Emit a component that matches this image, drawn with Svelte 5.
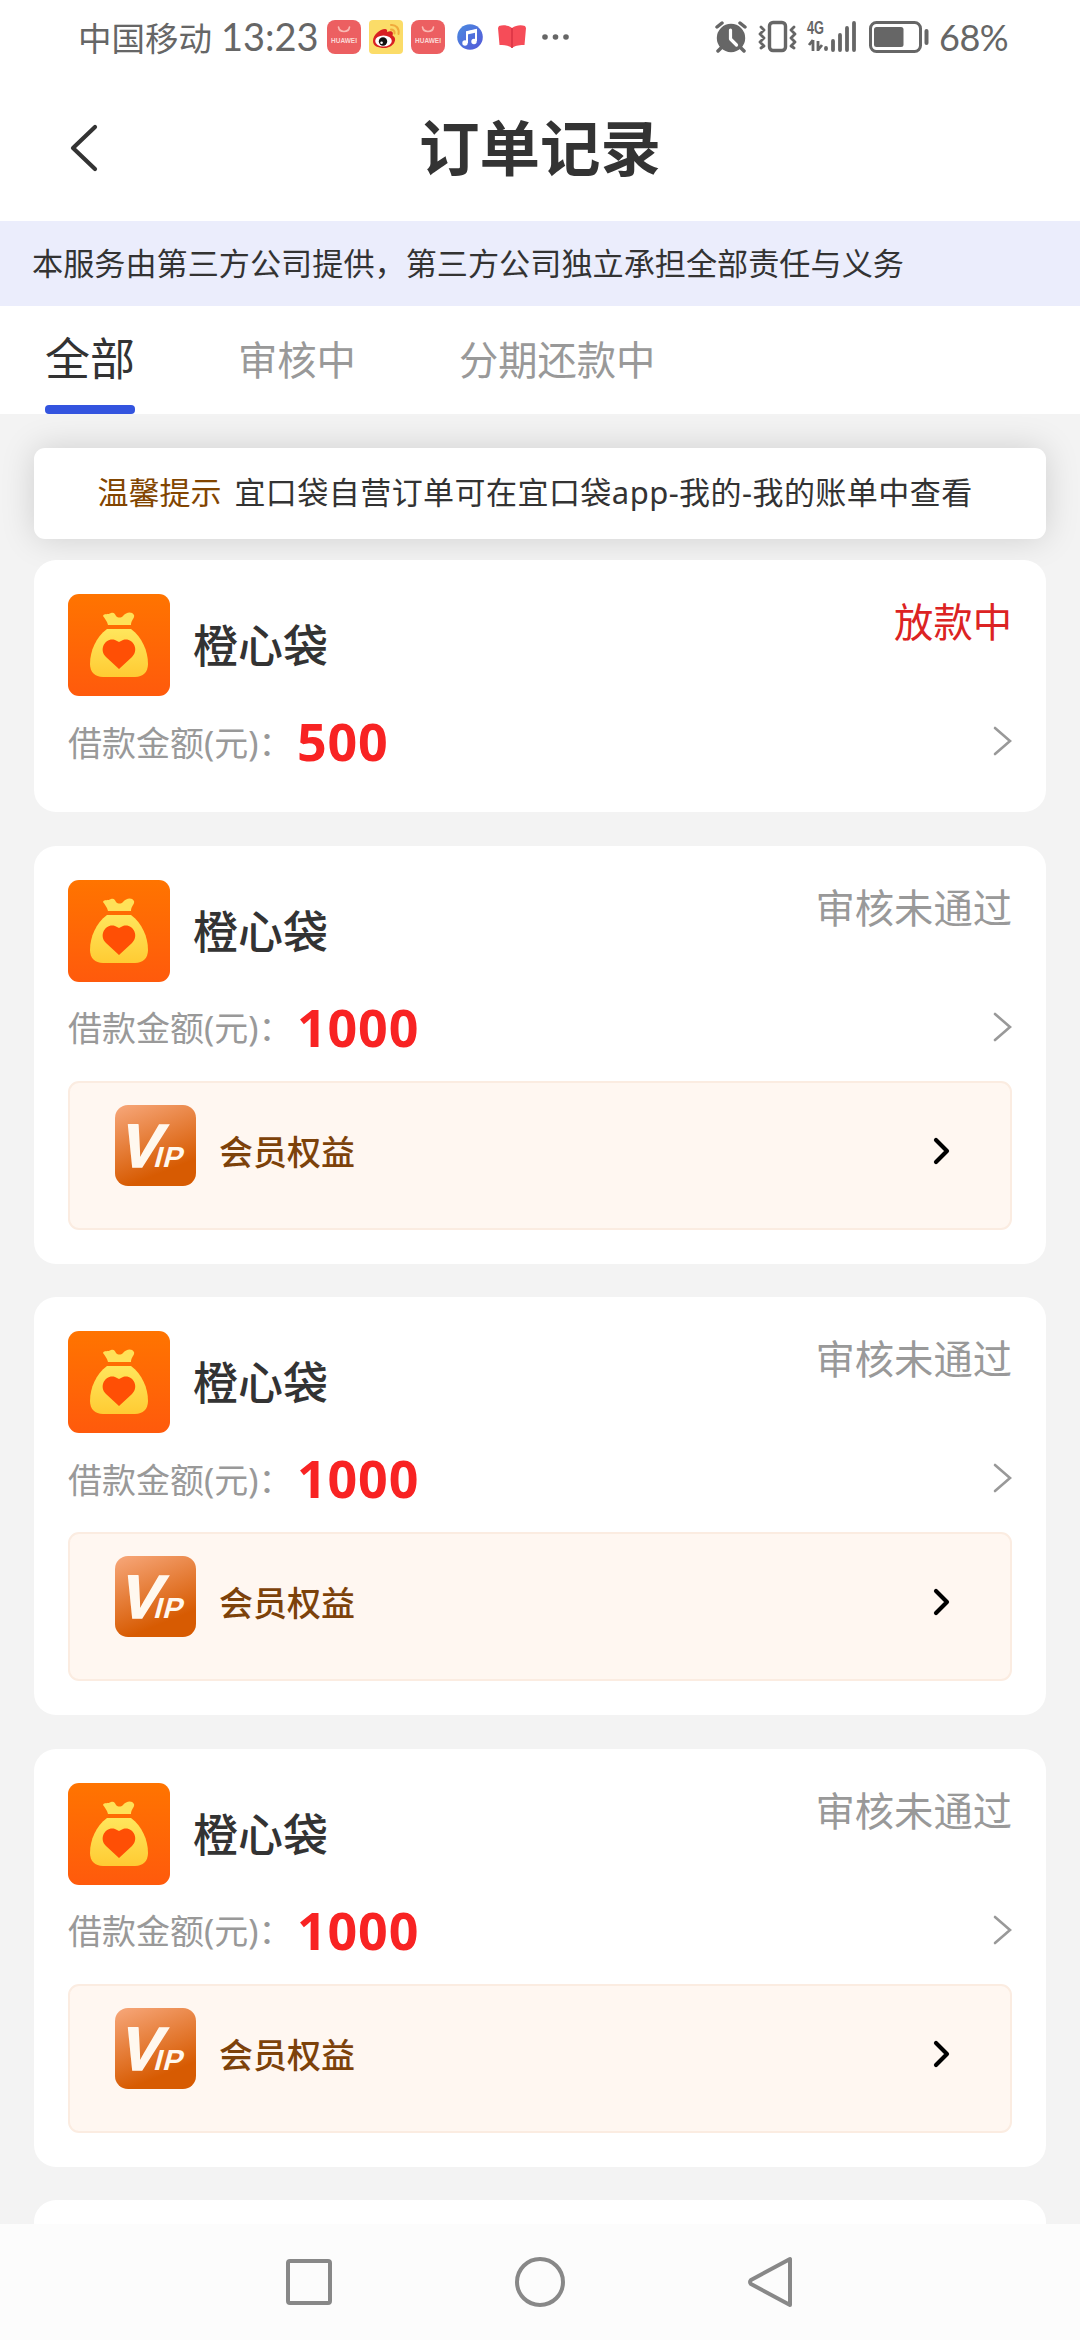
<script>
    const tabs = ["全部", "审核中", "分期还款中"];
    let active = "全部";

    const orders = [
        { name: "橙心袋", amount: "500", status: "放款中", paying: true, vip: false },
        { name: "橙心袋", amount: "1000", status: "审核未通过", paying: false, vip: true },
        { name: "橙心袋", amount: "1000", status: "审核未通过", paying: false, vip: true },
        { name: "橙心袋", amount: "1000", status: "审核未通过", paying: false, vip: true },
    ];
</script>

<div class="screen">
    <svg class="defs" width="0" height="0" aria-hidden="true">
        <defs>
            <linearGradient id="orange" x1="0" y1="0" x2="0" y2="1">
                <stop offset="0" stop-color="#ff7400"/>
                <stop offset="1" stop-color="#ff5a0c"/>
            </linearGradient>
            <linearGradient id="bag" x1="0" y1="0" x2="0" y2="1">
                <stop offset="0" stop-color="#ffe65c"/>
                <stop offset="1" stop-color="#ffcb33"/>
            </linearGradient>
            <linearGradient id="vip" x1="0.2" y1="0" x2="0.6" y2="1">
                <stop offset="0" stop-color="#f5a272"/>
                <stop offset="0.85" stop-color="#d75b02"/>
            </linearGradient>
            <linearGradient id="music" x1="0" y1="0" x2="1" y2="1">
                <stop offset="0" stop-color="#4a8be0"/>
                <stop offset="1" stop-color="#5558d8"/>
            </linearGradient>
        </defs>
    </svg>

    <div class="statusbar">
        <span class="carrier">中国移动</span>
        <span class="time">13:23</span>
        <div class="apps">
            {@render huawei()}
            <svg width="34" height="34" viewBox="0 0 34 34">
                <rect width="34" height="34" rx="4" fill="#fbdc68"/>
                <path d="M4 21c0-6 7-12 12-12 2 0 2.500 1.500 2 3 4-1.500 7-.5 5.500 3.500 6 3 1 12.500-8 12.500C9 28 4 26 4 21z" fill="#d81f22"/>
                <ellipse cx="14.500" cy="21" rx="8.300" ry="5.600" fill="#fff"/>
                <circle cx="14" cy="21.500" r="4.200" fill="#111"/>
                <circle cx="12.600" cy="22.700" r="1.300" fill="#fff"/>
                <path d="M22 5c5-.5 8.500 3.500 7.500 9M22 9.500c2.500 0 4 1.500 3.500 4" fill="none" stroke="#f0aa3c" stroke-width="2" stroke-linecap="round"/>
            </svg>
            {@render huawei()}
            <svg width="34" height="34" viewBox="0 0 34 34">
                <circle cx="17" cy="17" r="12.800" fill="url(#music)"/>
                <path d="M14 23V12l9-2v11" fill="none" stroke="#fff" stroke-width="2"/>
                <path d="M14 13l9-2" stroke="#fff" stroke-width="3"/>
                <circle cx="12" cy="23" r="2.700" fill="#fff"/>
                <circle cx="21" cy="21.500" r="2.700" fill="#fff"/>
            </svg>
            <svg width="34" height="34" viewBox="0 0 34 34">
                <path d="M4 6c4-1.500 9-1 13 2 4-3 9-3.500 13-2l1 2-1.500 17c-4 0-8.500 0-12.500 3-4-3-8.500-3-12.500-3L3 8z" fill="#f64c58"/>
                <path d="M17 8v20" stroke="#d93243" stroke-width="1.500"/>
            </svg>
        </div>
        <svg class="dots" width="28" height="6" viewBox="0 0 28 6" fill="#666">
            <circle cx="3" cy="3" r="2.800"/><circle cx="13.500" cy="3" r="2.800"/><circle cx="24" cy="3" r="2.800"/>
        </svg>

        <svg class="signals" width="216" height="36" viewBox="0 0 216 36" fill="#666">
            <!-- alarm -->
            <circle cx="16" cy="19" r="14.200"/>
            <path d="M2 8l5-4M25 4l5 4M6 29l-3 3M26 29l3 3" stroke="#666" stroke-width="3.500" stroke-linecap="round"/>
            <path d="M15.500 11v9l6 6" fill="none" stroke="#fff" stroke-width="3.200" stroke-linecap="round" stroke-linejoin="round"/>
            <!-- vibrate -->
            <rect x="54.500" y="3.500" width="16" height="28" rx="3.500" fill="none" stroke="#666" stroke-width="3.400"/>
            <path d="M46 8l3 3-4 4 4 4-4 4 4 4-3 2M79 8l-3 3 4 4-4 4 4 4-4 4 3 2" fill="none" stroke="#666" stroke-width="2.800" stroke-linecap="round" stroke-linejoin="round"/>
            <!-- network -->
            <text x="92" y="15" font-size="18" font-weight="700" textLength="17" lengthAdjust="spacingAndGlyphs">4G</text>
            <path d="M98 21v11M94 26l4-5M103 22v10M103 31l4-5" fill="none" stroke="#666" stroke-width="2.800"/>
            <path d="M111 29v1M118 22v9M125 16v15M132 9v22M139 4v27" stroke="#666" stroke-width="3.800" stroke-linecap="round"/>
            <!-- battery -->
            <rect x="155.500" y="3.500" width="50" height="29" rx="6" fill="none" stroke="#666" stroke-width="3"/>
            <rect x="159" y="8" width="29.500" height="20" rx="2.500"/>
            <path d="M211.500 12v12" stroke="#666" stroke-width="4" stroke-linecap="round"/>
        </svg>
        <span class="percent">68%</span>
    </div>

    <header>
        <svg class="back" width="30" height="50" viewBox="0 0 30 50">
            <path d="M26 4L4 25l22 21" fill="none" stroke="#333" stroke-width="4.200" stroke-linecap="round" stroke-linejoin="round"/>
        </svg>
        <h1>订单记录</h1>
    </header>

    <div class="banner">本服务由第三方公司提供，第三方公司独立承担全部责任与义务</div>

    <nav class="tabs">
        {#each tabs as tab}
            <button class:active={tab === active} on:click={() => active = tab}>{tab}</button>
        {/each}
    </nav>

    <main>
        <div class="notice"><b>温馨提示</b><span>宜口袋自营订单可在宜口袋app-我的-我的账单中查看</span></div>

        {#each orders as order}
            <section class="card">
                <div class="top">
                    <svg class="logo" width="102" height="102" viewBox="0 0 102 102">
                        <rect width="102" height="102" rx="11" fill="url(#orange)"/>
                        <path d="M35 22c1-3 5-1 8-3 3-1 4 1 5 3 2 2 5 2 7 0 3-4 9-5 11-1 1 3-3 5-3 10H40c-1-4-3-6-5-9z" fill="#ffe158"/>
                        <path d="M39 35h24c11 8 17 22 17 35 0 8-5 13-13 13H35c-8 0-13-5-13-13 0-13 6-27 17-35z" fill="url(#bag)"/>
                        <path d="M51 75L38 63c-8-8 0-20 9-17l4 2 4-2c9-3 17 9 9 17z" fill="#ff4f05"/>
                    </svg>
                    <span class="name">{order.name}</span>
                    <span class="status" class:paying={order.paying}>{order.status}</span>
                </div>
                <div class="money">
                    <span class="label">借款金额(元)：</span>
                    <strong>{order.amount}</strong>
                    <svg width="20" height="32" viewBox="0 0 20 32">
                        <path d="M3 3l15 13L3 29" fill="none" stroke="#999" stroke-width="2.600" stroke-linecap="round"/>
                    </svg>
                </div>
                {#if order.vip}
                    <div class="benefit">
                        <svg class="vip" width="81" height="81" viewBox="0 0 81 81">
                            <rect width="81" height="81" rx="13" fill="url(#vip)"/>
                            <path d="M13 19h10v4H14z" fill="#fff8ef"/>
                            <text transform="translate(0 61.500) skewX(-15)" x="2" y="0"><tspan class="big">V</tspan><tspan class="small" dx="-5">IP</tspan></text>
                        </svg>
                        <span>会员权益</span>
                        <svg class="go" width="20" height="32" viewBox="0 0 20 32">
                            <path d="M4 5l11 11L4 27" fill="none" stroke="#000" stroke-width="4.200" stroke-linecap="round" stroke-linejoin="round"/>
                        </svg>
                    </div>
                {/if}
            </section>
        {/each}
        <section class="card next"></section>
    </main>

    <footer>
        <svg width="50" height="54" viewBox="0 0 50 54"><rect x="4" y="6" width="42" height="42" rx="2" /></svg>
        <svg width="50" height="54" viewBox="0 0 50 54"><circle cx="25" cy="27" r="23"/></svg>
        <svg width="50" height="54" viewBox="0 0 50 54"><path d="M44 4v46L5 29q-2-2 0-4z"/></svg>
    </footer>
</div>

{#snippet huawei()}
    <svg width="34" height="34" viewBox="0 0 34 34">
        <rect width="34" height="34" rx="8" fill="#ec5f61"/>
        <path d="M11.500 7c1 6 10 6 11 0" fill="none" stroke="#f9b9b4" stroke-width="1.600" stroke-linecap="round"/>
        <text x="4" y="22.500" font-size="7.500" font-weight="700" fill="#fbd9d6" textLength="26" lengthAdjust="spacingAndGlyphs">HUAWEI</text>
    </svg>
{/snippet}

<style>
    :global(body) {
        background: #f3f3f3;
    }

    .screen {
        display: flex;
        flex-direction: column;
        width: 1080px;
        height: 2340px;
        overflow: hidden;
        background: #f3f3f3;
        color: #333;
        font-family: "Noto Sans", "Noto Sans CJK SC", sans-serif;
    }

    .defs {
        position: absolute;
    }

    svg {
        display: block;
        flex: none;
    }

    svg text {
        font-family: "Liberation Sans", sans-serif;
    }

    .statusbar {
        display: flex;
        align-items: center;
        flex: none;
        box-sizing: border-box;
        height: 74px;
        padding-left: 78px;
        background: #fff;
        color: #666;
        white-space: nowrap;
    }

    .carrier {
        width: 143px;
        padding-bottom: 2px;
        font-size: 33.500px;
    }

    .time {
        width: 106px;
        padding-bottom: 2px;
        font-family: Lato, sans-serif;
        font-size: 38px;
    }

    .apps {
        display: flex;
        gap: 8px;
    }

    .dots {
        margin-left: 13px;
    }

    .signals {
        margin-left: 145px;
    }

    .percent {
        margin-left: 8px;
        padding-bottom: 1px;
        font-family: Lato, sans-serif;
        font-size: 36px;
        letter-spacing: -0.5px;
    }

    header {
        display: grid;
        grid-template-columns: 150px 1fr 150px;
        align-items: center;
        flex: none;
        height: 147px;
        background: #fff;
    }

    .back {
        margin-left: 69px;
    }

    h1 {
        margin: 0;
        font-size: 60.5px;
        font-weight: 700;
        line-height: 80px;
        text-align: center;
    }

    .banner {
        flex: none;
        box-sizing: border-box;
        height: 85px;
        padding-left: 32px;
        background: #ebedfc;
        font-size: 31.15px;
        line-height: 85px;
        white-space: nowrap;
    }

    .tabs {
        display: flex;
        flex: none;
        gap: 103px;
        height: 108px;
        padding-left: 45px;
        background: #fff;
    }

    .tabs button {
        box-sizing: border-box;
        height: 108px;
        padding: 9px 0 0;
        border: 0;
        border-bottom: 9px solid transparent;
        background: none;
        color: #999;
        font: 39.3px/90px "Noto Sans", "Noto Sans CJK SC", sans-serif;
    }

    .tabs .active {
        padding-top: 8px;
        border-bottom: 0;
        color: #333;
        font-size: 45px;
    }

    .tabs .active::after {
        content: "";
        display: block;
        height: 9px;
        margin-top: 1px;
        border-radius: 4px;
        background: #3354df;
    }

    main {
        display: flex;
        flex-direction: column;
        flex: 1;
        gap: 33.6px;
        min-height: 0;
        padding: 34px 34px 0;
        overflow: hidden;
    }

    .notice {
        display: flex;
        justify-content: center;
        flex: none;
        gap: 13px;
        box-sizing: border-box;
        height: 91px;
        margin-bottom: -12.6px;
        padding-right: 10px;
        border-radius: 11px;
        background: #fff;
        box-shadow: 0 0 34px rgba(0, 0, 0, 0.15);
        font-size: 31px;
        line-height: 89px;
        white-space: nowrap;
    }

    .notice b {
        color: #824500;
        font-weight: 400;
    }

    .notice span {
        letter-spacing: 0.45px;
    }

    .card {
        position: relative;
        flex: none;
        box-sizing: border-box;
        padding: 34px;
        border-radius: 22px;
        background: #fff;
    }

    .next {
        height: 252px;
    }

    .top {
        display: flex;
        height: 102px;
    }

    .name {
        margin-left: 23px;
        font-size: 45px;
        font-weight: 500;
        line-height: 104px;
    }

    .status {
        margin-left: auto;
        color: #999;
        font-size: 39.3px;
        line-height: 56px;
    }

    .paying {
        color: #dc2323;
    }

    .money {
        display: flex;
        align-items: center;
        box-sizing: border-box;
        height: 82px;
        padding-top: 8px;
    }

    .money .label {
        width: 229px;
        color: #999;
        font-size: 34px;
        white-space: nowrap;
    }

    .money strong {
        color: #f82323;
        font-size: 52px;
        letter-spacing: 0.8px;
        line-height: 74px;
    }

    .money svg {
        margin-left: auto;
    }

    .benefit {
        display: flex;
        align-items: flex-start;
        box-sizing: border-box;
        height: 149px;
        margin-top: 17px;
        padding: 22px 58px 0 45px;
        border: 2px solid #fbece1;
        border-radius: 11px;
        background: #fff7f1;
        color: #7d420a;
        font-size: 34px;
        font-weight: 500;
        line-height: 95px;
    }

    .benefit span {
        margin-left: 23px;
    }

    .vip text {
        fill: #fff8ef;
        font-weight: 700;
    }

    .vip .big {
        font-size: 61px;
        stroke: #fff8ef;
        stroke-width: 1.5px;
    }

    .vip .small {
        font-size: 29px;
        letter-spacing: 1px;
    }

    .go {
        margin: 30px 0 0 auto;
    }

    footer {
        display: flex;
        justify-content: center;
        align-items: center;
        flex: none;
        gap: 181px;
        height: 116px;
        background: #fcfcfc;
    }

    footer svg {
        fill: none;
        stroke: #888;
        stroke-width: 4;
        stroke-linejoin: round;
    }
</style>
